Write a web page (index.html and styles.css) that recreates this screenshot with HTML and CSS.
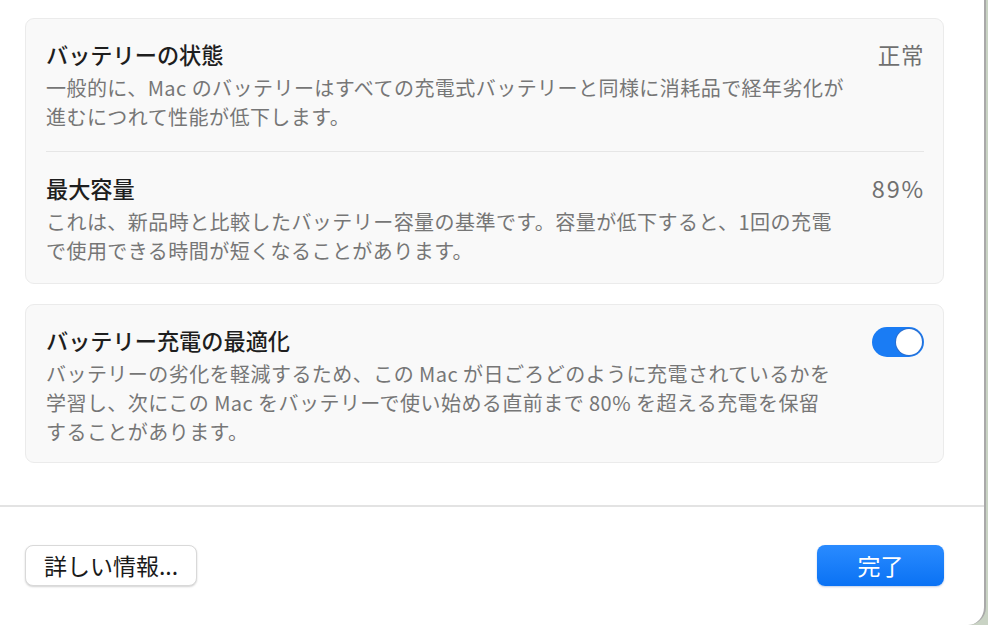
FILE: index.html
```html
<!DOCTYPE html>
<html lang="ja">
<head>
<meta charset="utf-8">
<title>バッテリーの状態</title>
<link rel="stylesheet" href="styles.css">
</head>
<body>
<div class="window">
  <div class="content">
    <section class="card">
      <div class="row">
        <div class="row-head">
          <h2 class="title">バッテリーの状態</h2>
          <span class="value">正常</span>
        </div>
        <p class="desc">一般的に、Mac のバッテリーはすべての充電式バッテリーと同様に消耗品で経年劣化が<br>進むにつれて性能が低下します。</p>
      </div>
      <div class="sep"></div>
      <div class="row">
        <div class="row-head">
          <h2 class="title">最大容量</h2>
          <span class="value value-num">89%</span>
        </div>
        <p class="desc">これは、新品時と比較したバッテリー容量の基準です。容量が低下すると、1回の充電<br>で使用できる時間が短くなることがあります。</p>
      </div>
    </section>

    <section class="card">
      <div class="row row-last">
        <div class="row-head">
          <h2 class="title">バッテリー充電の最適化</h2>
          <span class="toggle on"><span class="knob"></span></span>
        </div>
        <p class="desc">バッテリーの劣化を軽減するため、この Mac が日ごろどのように充電されているかを<br>学習し、次にこの Mac をバッテリーで使い始める直前まで 80% を超える充電を保留<br>することがあります。</p>
      </div>
    </section>
  </div>
  <footer class="footer">
    <button class="btn btn-plain">詳しい情報...</button>
    <button class="btn btn-primary">完了</button>
  </footer>
</div>
</body>
</html>
```
FILE: styles.css
```css
* { box-sizing: border-box; }
html, body { margin: 0; padding: 0; }
body {
  width: 988px;
  height: 625px;
  overflow: hidden;
  background: #c9d3c4;
  font-family: "Noto Sans CJK JP", "Noto Sans", sans-serif;
}
.window {
  width: 986px;
  height: 625px;
  background: #ffffff;
  border-right: 2px solid #a9a9a9;
  border-bottom-right-radius: 18px;
  display: flex;
  flex-direction: column;
}
.content {
  padding: 18px 40px 42px 25px;
  display: flex;
  flex-direction: column;
  gap: 20px;
  border-bottom: 2px solid #e3e3e3;
}
.card {
  width: 919px;
  background: #f9f9f9;
  border: 1px solid #ebebeb;
  border-radius: 9px;
  padding: 0 19px 0 20px;
}
.row { padding: 19px 0 20px; }
.row + .sep + .row { padding-top: 20px; padding-bottom: 18px; }
.row-last { padding-top: 19px; padding-bottom: 16px; }
.sep { height: 1px; background: #e6e6e6; }
.row-head {
  display: flex;
  justify-content: space-between;
  align-items: center;
  height: 32px;
}
.title {
  margin: 0;
  font-size: 22.2px;
  font-weight: 500;
  line-height: 32px;
  color: #1e1e1e;
}
.value {
  font-size: 22.5px;
  line-height: 32px;
  color: #707070;
  font-weight: 400;
  letter-spacing: 0.6px;
}
.value-num {
  font-size: 23.5px;
  letter-spacing: 1.8px;
  margin-right: -1px;
}
.desc {
  margin: 3px 0 0;
  white-space: nowrap;
  font-size: 20px;
  letter-spacing: 0.45px;
  line-height: 29px;
  color: #767676;
}
.toggle {
  width: 52px;
  height: 30px;
  border-radius: 15px;
  background: #1a7cf4;
  position: relative;
  margin-top: 4px;
}
.knob {
  position: absolute;
  right: 2px;
  top: 2px;
  width: 26px;
  height: 26px;
  border-radius: 50%;
  background: #ffffff;
  box-shadow: 0 0 0 1px #2a6fd0;
}
.footer {
  display: flex;
  justify-content: space-between;
  align-items: center;
  padding: 38px 40px 0 25px;
}
.btn {
  font-family: "Noto Sans CJK JP", "Noto Sans", sans-serif;
  font-size: 23px;
  line-height: 1;
  height: 41px;
  border-radius: 8px;
  cursor: default;
}
.btn-plain {
  width: 172px;
  background: #ffffff;
  color: #1a1a1a;
  border: 1px solid #d9d9d9;
  box-shadow: 0 1px 2px rgba(0, 0, 0, 0.18);
}
.btn-primary {
  width: 127px;
  color: #ffffff;
  border: none;
  background: linear-gradient(#2a8bff, #0a72f4);
  box-shadow: 0 1px 2px rgba(0, 60, 160, 0.25);
}
```
